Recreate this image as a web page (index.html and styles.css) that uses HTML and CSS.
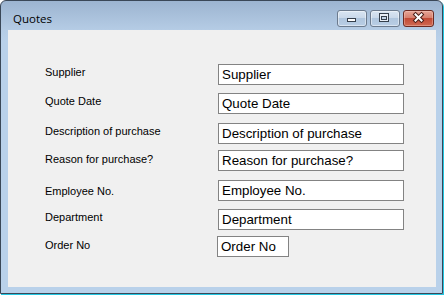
FILE: index.html
```html
<!DOCTYPE html>
<html lang="en">
<head>
<meta charset="utf-8">
<title>Quotes</title>
<link rel="stylesheet" href="styles.css">
</head>
<body>
<div class="window">
  <div class="titlebar">
    <span class="title">Quotes</span>
    <div class="caption-buttons">
      <div class="cbtn cbtn-plain">
        <svg class="glyph" width="28" height="15" viewBox="0 0 28 15"><rect x="9.5" y="7.5" width="8" height="3" fill="#fff" stroke="#353f4b"/></svg>
      </div>
      <div class="cbtn cbtn-plain">
        <svg class="glyph" width="28" height="15" viewBox="0 0 28 15"><rect x="8.5" y="2.5" width="9" height="8" fill="#e8eef6" stroke="#353f4b"/><rect x="10.5" y="5.5" width="5" height="3" fill="#c3d3e6" stroke="#353f4b"/></svg>
      </div>
      <div class="cbtn cbtn-close">
        <svg class="glyph" width="29" height="15" viewBox="0 0 29 15"><path d="M11.5 3.5 L17.5 9.5 M17.5 3.5 L11.5 9.5" stroke="#4a1e18" stroke-width="4" stroke-linecap="square" fill="none"/><path d="M11.5 3.5 L17.5 9.5 M17.5 3.5 L11.5 9.5" stroke="#fff" stroke-width="2" stroke-linecap="square" fill="none"/></svg>
      </div>
    </div>
  </div>
  <div class="client">
    <form class="form">
      <div class="row">
        <label class="label">Supplier</label>
        <input class="field" type="text" value="Supplier">
      </div>
      <div class="row gap-8">
        <label class="label">Quote Date</label>
        <input class="field" type="text" value="Quote Date">
      </div>
      <div class="row gap-9">
        <label class="label">Description of purchase</label>
        <input class="field" type="text" value="Description of purchase">
      </div>
      <div class="row gap-6">
        <label class="label label-low3">Reason for purchase?</label>
        <input class="field" type="text" value="Reason for purchase?">
      </div>
      <div class="row gap-9">
        <label class="label label-low5">Employee No.</label>
        <input class="field" type="text" value="Employee No.">
      </div>
      <div class="row gap-8">
        <label class="label">Department</label>
        <input class="field" type="text" value="Department">
      </div>
      <div class="row gap-6">
        <label class="label label-low3">Order No</label>
        <input class="field field-short" type="text" value="Order No">
      </div>
    </form>
  </div>
</div>
</body>
</html>
```

FILE: styles.css
```css
html, body {
  margin: 0;
  padding: 0;
  background: #ffffff;
}

body {
  width: 444px;
  height: 295px;
  overflow: hidden;
}

.window {
  box-sizing: border-box;
  width: 443px;
  height: 294px;
  border: 1px solid #3a4757;
  border-radius: 6px 6px 0 0;
  background: linear-gradient(to bottom, #9cb4d0 0px, #b5cce5 29px, #b9d1ea 40px, #b9d1ea 100%);
  padding: 0 6px 6px 7px;
  display: flex;
  flex-direction: column;
  box-shadow: 1px 1px 0 #22c6e2;
}

.titlebar {
  height: 29px;
  display: flex;
  align-items: flex-start;
  padding-left: 5px;
}

.title {
  flex: 1;
  font-family: "Open Sans", "Noto Sans", sans-serif;
  font-size: 11.5px;
  line-height: 16px;
  margin-top: 10px;
  color: #000;
}

.caption-buttons {
  display: flex;
  gap: 3px;
  margin-top: 9px;
  margin-right: 2px;
}

.cbtn {
  box-sizing: border-box;
  width: 30px;
  height: 17px;
  border-radius: 3px;
  border: 1px solid #6c7b8e;
  display: flex;
}

.cbtn-plain {
  background: linear-gradient(to bottom, #d9e5f2 0%, #cad9ea 45%, #b0c6de 50%, #b9cee5 100%);
  box-shadow: inset 0 0 0 1px rgba(255, 255, 255, 0.45);
}

.cbtn-close {
  width: 31px;
  border-color: #6b2a22;
  background: linear-gradient(to bottom, #e6a597 0%, #d7806e 45%, #c24a36 50%, #cf6a52 100%);
  box-shadow: inset 0 0 0 1px rgba(255, 220, 210, 0.35);
}

.glyph {
  display: block;
}

.client {
  flex: 1;
  background: #f0f0f0;
}

.form {
  margin: 0;
  padding: 34px 0 0 37px;
  display: flex;
  flex-direction: column;
}

.row {
  display: flex;
  align-items: flex-start;
  height: 21px;
}

.gap-6 { margin-top: 6px; }
.gap-8 { margin-top: 8px; }
.gap-9 { margin-top: 9px; }

.label {
  width: 173px;
  flex: none;
  font-family: "Liberation Sans", Arial, sans-serif;
  font-size: 11px;
  line-height: 13px;
  padding-top: 2px;
  color: #000;
}

.label-low3 { padding-top: 3px; }
.label-low5 { padding-top: 5px; }

.field {
  box-sizing: border-box;
  width: 186px;
  height: 21px;
  margin: 0;
  border: 1px solid #838383;
  border-radius: 0;
  padding: 0 3px;
  background: #fff;
  color: #000;
  font-family: "Liberation Sans", Arial, sans-serif;
  font-size: 13.33px;
  line-height: 19px;
  outline: none;
}

.field-short {
  width: 72px;
  margin-left: -1px;
}
```
